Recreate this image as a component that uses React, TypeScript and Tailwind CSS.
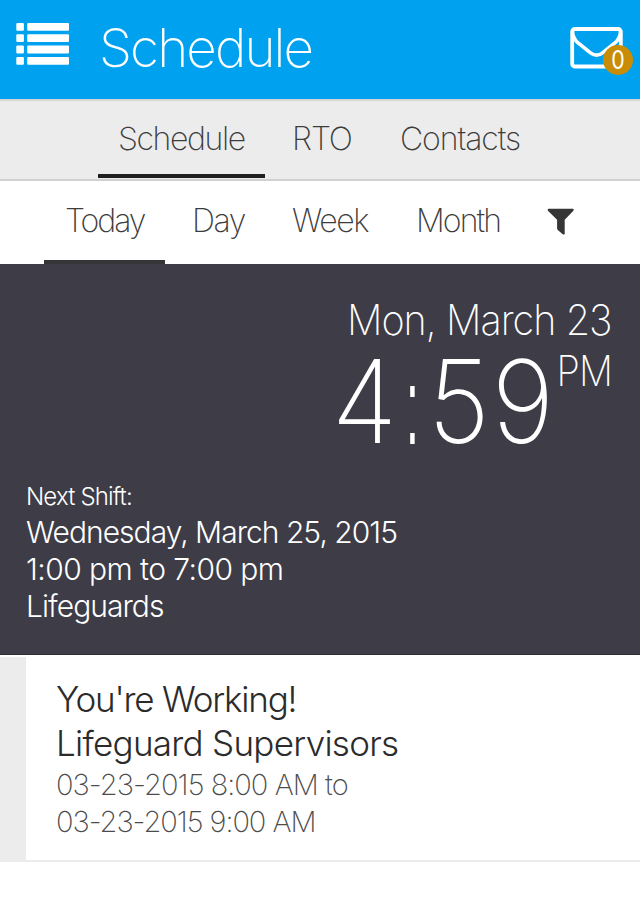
import React from "react";

function ListIcon() {
  return (
    <svg width="54" height="42" viewBox="0 0 54 42" fill="#fff" className="block">
      {[0, 11.3, 22.6, 34].map((y) => (
        <g key={y}>
          <rect x="0.3" y={y} width="7.6" height="7.8" rx="1" />
          <rect x="11.2" y={y} width="41.8" height="7.8" rx="1" />
        </g>
      ))}
    </svg>
  );
}

function MailIcon() {
  return (
    <svg width="53" height="42" viewBox="0 0 53 42" fill="none" stroke="#fff" strokeWidth="3.8" className="block">
      <rect x="2.2" y="2" width="48.6" height="37.5" rx="2.5" />
      <path d="M2.500 4C2.500 9 4 12 7.500 15.500L20.500 25.800C24.500 29 28.500 29 32.500 25.800L45.500 15.500C49 12 50.500 9 50.500 4" strokeWidth="3.600" />
    </svg>
  );
}

function FilterIcon() {
  return (
    <svg width="28" height="28" viewBox="0 0 28 28" fill="#363636" className="block">
      <path d="M1.200 0.800H26.200Q27.200 1.400 26.400 2.800L17.700 11.800V26Q17 27 15.700 26.200L10.800 22Q10.100 21.400 10.100 20.500V11.800L0.900 2.800Q0.300 1.400 1.200 0.800Z" />
    </svg>
  );
}

export default function App() {
  return (
    <div className="flex h-[920px] w-[640px] flex-col overflow-hidden bg-white font-['Inter','Liberation_Sans',sans-serif] whitespace-nowrap">
      <header className="flex h-[99px] bg-[#00a1ef] pr-[17px] text-white">
        <div className="mt-[23px] ml-4 w-[54px]"><ListIcon /></div>
        <h1 className="mt-[18px] ml-[29px] text-[53px] leading-[61px] font-[200] tracking-[-1.9px]">Schedule</h1>
        <div className="relative mt-[27px] ml-auto">
          <MailIcon />
          <span className="absolute top-[18px] left-[33px] flex size-[30px] items-center justify-center rounded-full bg-[#c98d05] text-[25px] leading-none font-normal">
            <span className="scale-x-[0.85]">0</span>
          </span>
        </div>
      </header>

      <nav className="flex h-[82px] border-t-2 border-b-2 border-t-[#d5d5d5] border-b-[#d0d0d0] bg-[#ececec] pl-[98px] text-[32px] leading-[75px] font-[200] text-[#3c3c3c]">
        <a className="h-[77px] w-[167px] border-b-4 border-[#1f1f1f] pl-5 tracking-[-1.4px]">Schedule</a>
        <a className="w-[108px] pl-[27px] tracking-[-1.1px]">RTO</a>
        <a className="pl-[27px] tracking-[-1.1px]">Contacts</a>
      </nav>

      <nav className="flex h-[83px] bg-white pl-11 text-[32px] leading-[80px] font-[200] text-[#3c3c3c]">
        <a className="h-[83px] w-[121px] border-b-4 border-[#353538] pl-[21px] tracking-[-2px]">Today</a>
        <a className="w-[100px] pl-[27px] tracking-[-1.4px]">Day</a>
        <a className="w-[124px] pl-[27px] tracking-[-1.4px]">Week</a>
        <a className="w-[158px] pl-[27px] tracking-[-1.9px]">Month</a>
        <div className="pt-[27px]"><FilterIcon /></div>
      </nav>

      <section className="h-[391px] border-b border-[#2c2b36] bg-[#3d3c47] text-white">
        <div className="flex h-[75px] justify-end pt-[31px] pr-7 text-[42px] leading-[50px]">
          <div className="h-[50px] origin-right scale-x-[0.94] font-[200] tracking-[-1px]">Mon, March 23</div>
        </div>
        <div className="flex h-[137px] items-start justify-end pt-[7px] pr-7">
          <div className="flex h-[112px] origin-right scale-x-[0.93] items-start text-[115px] leading-[112px] font-[200]">
            <span>4</span>
            <span className="w-[33px] scale-x-[0.45] text-center font-['Liberation_Sans'] text-[110px] leading-[120px] font-normal">:</span>
            <span className="tracking-[2px]">59</span>
          </div>
          <div className="flex h-[48px] w-[56px] origin-right scale-x-[0.9] justify-end text-[42px] leading-[50px] font-[200] tracking-[-1px]">PM</div>
        </div>
        <div className="pl-[26px] font-light">
          <div className="h-[38px] text-[24px] leading-[42px] tracking-[-0.85px]">Next Shift:</div>
          <div className="text-[30px] leading-[37px] tracking-[-0.97px]">Wednesday, March 25, 2015</div>
          <div className="text-[30px] leading-[37px] tracking-[-0.55px]">1:00 pm to 7:00 pm</div>
          <div className="text-[30px] leading-[37px] tracking-[-0.95px]">Lifeguards</div>
        </div>
      </section>

      <section className="mt-[2px] flex h-[205px] bg-white">
        <div className="w-[26px] bg-[#ececec]" />
        <div className="flex-1 border-b-2 border-[#ececec] pt-5 pl-[30px]">
          <div className="text-[35px] leading-[44px] font-light tracking-[-1.2px] text-[#2b2b2b]">You're Working!</div>
          <div className="text-[35px] leading-[45px] font-light tracking-[-0.72px] text-[#2b2b2b]">Lifeguard Supervisors</div>
          <div className="text-[29px] leading-[37px] font-[200] tracking-[-0.95px] text-[#4c4c4c]">03-23-2015 8:00 AM to</div>
          <div className="text-[29px] leading-[37px] font-[200] tracking-[-1.05px] text-[#4c4c4c]">03-23-2015 9:00 AM</div>
        </div>
      </section>
    </div>
  );
}
